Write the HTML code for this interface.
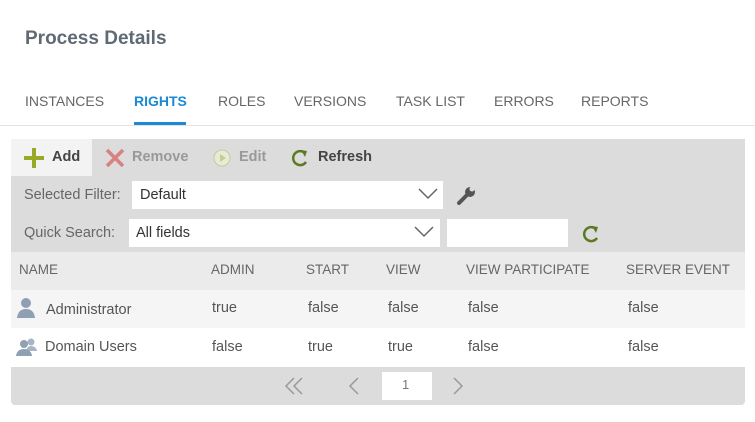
<!DOCTYPE html><html><head><style>
*{margin:0;padding:0;box-sizing:border-box}
body{width:755px;height:422px;background:#fff;font-family:"Liberation Sans",sans-serif;position:relative;overflow:hidden;color:#555}
.a{position:absolute;white-space:nowrap}
.tab{position:absolute;top:93px;font-size:14px;color:#666}
.cell{position:absolute;font-size:14.5px;color:#555}
.hd{position:absolute;top:262px;font-size:13.5px;color:#666}
</style></head><body>
<div class="a" style="left:25px;top:28px;font-size:19px;font-weight:bold;color:#5f6a75">Process Details</div>
<div class="tab" style="left:25px">INSTANCES</div>
<div class="tab" style="left:134px;color:#1a8ad4;font-weight:bold">RIGHTS</div>
<div class="tab" style="left:218px">ROLES</div>
<div class="tab" style="left:294px">VERSIONS</div>
<div class="tab" style="left:396px">TASK LIST</div>
<div class="tab" style="left:494px">ERRORS</div>
<div class="tab" style="left:581px">REPORTS</div>
<div class="a" style="left:134px;top:122px;width:52px;height:3px;background:#1a8ad4"></div>
<div class="a" style="left:0;top:125px;width:755px;height:1px;background:#e3e3e3"></div>

<div class="a" style="left:11px;top:139px;width:734px;height:266px;background:#dcdcdc;border-radius:0 0 4px 4px"></div>
<div class="a" style="left:11px;top:139px;width:81px;height:37px;background:#f3f3f3"></div>
<svg class="a" style="left:24px;top:148px" width="20" height="20"><rect x="8" y="0" width="4" height="20" fill="#9aa828"/><rect x="0" y="8" width="20" height="4" fill="#9aa828"/></svg>
<div class="a" style="left:52px;top:149px;font-size:14.5px;color:#444;font-weight:bold">Add</div>
<svg class="a" style="left:105px;top:148px" width="20" height="20"><path d="M2 2L18 18M18 2L2 18" stroke="#d98080" stroke-width="3.5"/></svg>
<div class="a" style="left:132px;top:149px;font-size:14.5px;color:#999;font-weight:bold">Remove</div>
<svg class="a" style="left:213px;top:149px" width="18" height="18"><circle cx="9" cy="9" r="8" fill="#e9ecd4" stroke="#c4cc99"/><path d="M7 5L13 9L7 13Z" fill="#c4cc99"/></svg>
<div class="a" style="left:239px;top:149px;font-size:14.5px;color:#999;font-weight:bold">Edit</div>
<svg class="a" style="left:290px;top:148px" width="20" height="20"><path d="M15 5A7 7 0 1 0 16 14" fill="none" stroke="#5b7a22" stroke-width="2.5"/><path d="M11 2L17 3L15 9Z" fill="#5b7a22"/></svg>
<div class="a" style="left:318px;top:149px;font-size:14.5px;color:#444;font-weight:bold">Refresh</div>

<div class="a" style="left:24px;top:187px;font-size:14.5px;color:#666">Selected Filter:</div>
<div class="a" style="left:132px;top:181px;width:311px;height:28px;background:#fff"></div>
<div class="a" style="left:140px;top:187px;font-size:14.5px;color:#333">Default</div>
<svg class="a" style="left:418px;top:188px" width="20" height="12"><path d="M1 1L10 10L19 1" fill="none" stroke="#666" stroke-width="1.5"/></svg>
<svg class="a" style="left:455px;top:184px" width="22" height="22"><path d="M4 19L11 12" stroke="#555" stroke-width="4" stroke-linecap="round"/><circle cx="15" cy="8" r="5" fill="#555"/><circle cx="17" cy="5" r="2.5" fill="#dcdcdc"/></svg>

<div class="a" style="left:24px;top:225px;font-size:14.5px;color:#666">Quick Search:</div>
<div class="a" style="left:129px;top:219px;width:311px;height:28px;background:#fff"></div>
<div class="a" style="left:136px;top:225px;font-size:14.5px;color:#333">All fields</div>
<svg class="a" style="left:414px;top:226px" width="20" height="12"><path d="M1 1L10 10L19 1" fill="none" stroke="#666" stroke-width="1.5"/></svg>
<div class="a" style="left:447px;top:219px;width:121px;height:28px;background:#fff"></div>
<svg class="a" style="left:581px;top:224px" width="20" height="20"><path d="M15 5A7 7 0 1 0 16 14" fill="none" stroke="#5b7a22" stroke-width="2.5"/><path d="M11 2L17 3L15 9Z" fill="#5b7a22"/></svg>

<div class="a" style="left:11px;top:252px;width:734px;height:38px;background:#ebebeb"></div>
<div class="hd" style="left:19px">NAME</div>
<div class="hd" style="left:211px">ADMIN</div>
<div class="hd" style="left:306px">START</div>
<div class="hd" style="left:386px">VIEW</div>
<div class="hd" style="left:466px">VIEW PARTICIPATE</div>
<div class="hd" style="left:626px">SERVER EVENT</div>

<div class="a" style="left:11px;top:290px;width:734px;height:38px;background:#f5f5f5"></div>
<div class="a" style="left:11px;top:328px;width:734px;height:39px;background:#fff"></div>
<svg class="a" style="left:16px;top:297px" width="20" height="22"><circle cx="10" cy="6" r="5" fill="#8fa0b3"/><path d="M1 21Q2 12 10 12Q18 12 19 21Z" fill="#8fa0b3"/></svg>
<div class="cell" style="left:46px;top:302px">Administrator</div>
<div class="cell" style="left:212px;top:300px">true</div>
<div class="cell" style="left:308px;top:300px">false</div>
<div class="cell" style="left:388px;top:300px">false</div>
<div class="cell" style="left:468px;top:300px">false</div>
<div class="cell" style="left:628px;top:300px">false</div>
<svg class="a" style="left:16px;top:337px" width="22" height="20"><circle cx="15" cy="5" r="3.5" fill="#a8b5c4"/><path d="M10 14Q11 9 15 9Q20 9 21 14Z" fill="#a8b5c4"/><circle cx="8" cy="7" r="4" fill="#8fa0b3"/><path d="M0 19Q1 12 8 12Q15 12 16 19Z" fill="#8fa0b3"/></svg>
<div class="cell" style="left:45px;top:339px">Domain Users</div>
<div class="cell" style="left:212px;top:339px">false</div>
<div class="cell" style="left:308px;top:339px">true</div>
<div class="cell" style="left:388px;top:339px">true</div>
<div class="cell" style="left:468px;top:339px">false</div>
<div class="cell" style="left:628px;top:339px">false</div>

<svg class="a" style="left:284px;top:377px" width="22" height="18"><path d="M10 1L2 9L10 17M18 1L10 9L18 17" fill="none" stroke="#999" stroke-width="1.5"/></svg>
<svg class="a" style="left:348px;top:377px" width="12" height="18"><path d="M10 1L2 9L10 17" fill="none" stroke="#999" stroke-width="1.5"/></svg>
<div class="a" style="left:382px;top:372px;width:50px;height:28px;background:#fff"></div>
<div class="a" style="left:402px;top:377px;font-size:13px;color:#777">1</div>
<svg class="a" style="left:452px;top:377px" width="12" height="18"><path d="M2 1L10 9L2 17" fill="none" stroke="#999" stroke-width="1.5"/></svg>
</body></html>
